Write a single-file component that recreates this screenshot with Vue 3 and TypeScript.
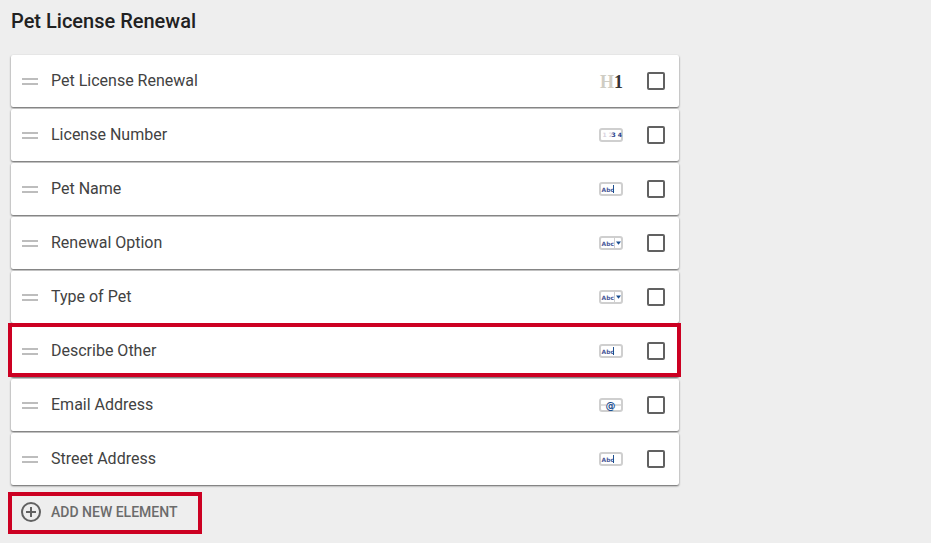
<script setup lang="ts">
type IconKind = "heading" | "number" | "text" | "select" | "email";

interface FormElement {
  label: string;
  icon: IconKind;
  marked?: boolean;
}

const elements: FormElement[] = [
  { label: "Pet License Renewal", icon: "heading" },
  { label: "License Number", icon: "number" },
  { label: "Pet Name", icon: "text" },
  { label: "Renewal Option", icon: "select" },
  { label: "Type of Pet", icon: "select" },
  { label: "Describe Other", icon: "text", marked: true },
  { label: "Email Address", icon: "email" },
  { label: "Street Address", icon: "text" },
];
</script>

<template>
  <main class="page">
    <h1 class="title">Pet License Renewal</h1>

    <ul class="element-list">
      <li
        v-for="item in elements"
        :key="item.label"
        :class="['element-row', { marked: item.marked }]"
      >
        <span class="handle"></span>
        <span class="label">{{ item.label }}</span>

        <span v-if="item.icon === 'heading'" class="type-icon heading">
          <span class="h-letter">H</span><span class="h-num">1</span>
        </span>
        <svg v-else class="type-icon" width="24" height="14" viewBox="0 0 24 14">
          <rect x="1" y="1" width="22" height="12" rx="2" fill="#fff" stroke="#cfcfcf" stroke-width="2" />
          <template v-if="item.icon === 'number'">
            <text x="3.5" y="9" class="tiny" fill="#d8d3e0">1 2</text>
            <text x="12.5" y="9" class="tiny" fill="#27408b">3 4</text>
          </template>
          <template v-else-if="item.icon === 'text'">
            <text x="2.6" y="9.5" class="tiny" fill="#4a5a9a">Abc</text>
            <line x1="14.5" y1="3" x2="14.5" y2="11" stroke="#1b4f8f" />
          </template>
          <template v-else-if="item.icon === 'select'">
            <text x="2.6" y="9.5" class="tiny" fill="#4a5a9a">Abc</text>
            <line x1="15.5" y1="2" x2="15.5" y2="12" stroke="#cfcfcf" />
            <path d="M17 5.5h5l-2.5 3.2z" fill="#1b4f8f" />
          </template>
          <template v-else>
            <line x1="2" y1="7" x2="7" y2="7" stroke="#bdbdbd" />
            <line x1="16" y1="7" x2="22" y2="7" stroke="#bdbdbd" />
            <text x="11.5" y="10.5" text-anchor="middle" class="at" fill="#1b4f8f">@</text>
          </template>
        </svg>

        <span class="check"></span>
      </li>
    </ul>

    <button class="add-button" type="button">
      <svg width="20" height="20" viewBox="0 0 20 20" fill="none" stroke="#616161" stroke-width="2">
        <circle cx="10" cy="10" r="9" />
        <line x1="10" y1="5" x2="10" y2="15" />
        <line x1="5" y1="10" x2="15" y2="10" />
      </svg>
      <span>ADD NEW ELEMENT</span>
    </button>
  </main>
</template>

<style>
html,
body {
  background: #eeeeee;
}
</style>

<style scoped>
.page {
  width: 931px;
  height: 543px;
  box-sizing: border-box;
  padding: 9px 0 0 11px;
  overflow: hidden;
  background: #eeeeee;
  font-family: Roboto, "Liberation Sans", sans-serif;
}

.title {
  margin: 0;
  font-size: 20px;
  line-height: 24px;
  font-weight: 500;
  color: #212121;
}

.element-list {
  width: 668px;
  margin: 22px 0 0;
  padding: 0;
  list-style: none;
  display: flex;
  flex-direction: column;
  gap: 2px;
}

.element-row {
  position: relative;
  height: 52px;
  display: flex;
  align-items: center;
  padding: 0 14px 0 11px;
  background: #fff;
  border-radius: 2px;
  box-shadow: 0 1px 2px rgba(0, 0, 0, 0.6);
}

.element-row.marked::after {
  content: "";
  position: absolute;
  left: -3px;
  right: -2px;
  top: -2px;
  bottom: 0;
  border: 4px solid #cc0022;
  pointer-events: none;
}

.handle {
  width: 16px;
  height: 3px;
  margin: 1px 13px 0 0;
  border-top: 2px solid #bdbdbd;
  border-bottom: 2px solid #bdbdbd;
}

.label {
  flex: 1;
  padding-bottom: 2px;
  font-size: 16px;
  color: #424242;
}

.type-icon {
  flex: none;
  width: 24px;
  margin-right: 24px;
}

.heading {
  display: flex;
  justify-content: flex-end;
  margin-top: 1px;
  font-family: "Liberation Serif", serif;
  font-size: 18px;
  font-weight: 700;
  line-height: 18px;
}

.h-letter {
  color: #cfcdc4;
}

.h-num {
  color: #333;
}

.tiny {
  font-family: "DejaVu Sans", sans-serif;
  font-size: 6px;
  font-weight: 700;
}

.at {
  font-family: "DejaVu Sans", sans-serif;
  font-size: 10px;
  font-weight: 700;
}

.check {
  flex: none;
  width: 14px;
  height: 14px;
  border: 2px solid #616161;
  border-radius: 2px;
}

.add-button {
  position: relative;
  display: flex;
  align-items: center;
  gap: 10px;
  margin: 11px 0 0 -1px;
  padding: 0 0 0 11px;
  height: 32px;
  border: none;
  background: transparent;
  font-family: inherit;
  font-size: 14px;
  font-weight: 500;
  color: #6b6b6b;
}

.add-button::after {
  content: "";
  position: absolute;
  left: -2px;
  top: -4px;
  box-sizing: border-box;
  width: 194px;
  height: 42px;
  border: 4px solid #cc0022;
  pointer-events: none;
}
</style>
